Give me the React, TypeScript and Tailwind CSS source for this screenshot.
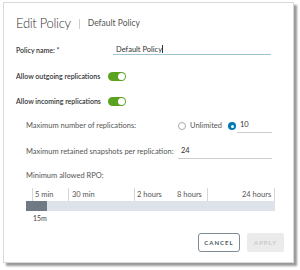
export default function App() {
  const ticks = [
    { label: '5 min', tick: 6, left: 9 },
    { label: '30 min', tick: 42, left: 46 },
    { label: '2 hours', tick: 108, left: 111 },
    { label: '8 hours', tick: 181, left: 151 },
    { label: '24 hours', tick: 248, left: 216 },
  ];

  return (
    <div className="w-[300px] h-[270px] bg-white pt-[2px] pl-[3px] font-['Lato',sans-serif]">
      <div className="w-[291px] h-[261px] border border-[#d9d9d9] bg-white shadow-[3px_3px_2px_rgba(0,0,0,0.4)] flex flex-col">
        {/* header */}
        <div className="flex items-center pl-[12px] pt-[11px] h-[30px]">
          <span className="text-[13px] font-light tracking-[-0.3px] text-[#333] leading-none">Edit Policy</span>
          <span className="w-px h-[10px] bg-[#d0d0d0] mx-[8px]" />
          <span className="text-[8.5px] font-normal text-[#555] leading-none">Default Policy</span>
        </div>

        {/* policy name */}
        <div className="flex items-end pl-[12px] mt-[10px] h-[12px]">
          <span className="w-[97px] text-[7px] font-semibold text-[#333]">Policy name: *</span>
          <div className="w-[158px] border-b-[1.5px] border-[#9fc3d3] pl-[3px] pb-[1px] text-[7.5px] text-[#333] leading-none">
            Default Policy<span className="inline-block w-px h-[8px] bg-[#333] align-[-1px]" />
          </div>
        </div>

        {/* toggles */}
        {['Allow outgoing replications', 'Allow incoming replications'].map((t, i) => (
          <div key={t} className={`flex items-center pl-[12px] h-[10px] ${i === 0 ? 'mt-[16px]' : 'mt-[15px]'}`}>
            <span className="w-[92px] text-[7px] font-semibold text-[#333]">{t}</span>
            <span className="w-[18px] h-[9px] rounded-full bg-[#5aa220] flex items-center justify-end pr-[1px]">
              <span className="w-[7px] h-[7px] rounded-full bg-white" />
            </span>
          </div>
        ))}

        {/* max replications */}
        <div className="flex items-center pl-[22px] mt-[15px] h-[10px] text-[7.5px] text-[#555]">
          <span className="w-[152px]">Maximum number of replications:</span>
          <span className="w-[8px] h-[8px] rounded-full border border-[#aaa]" />
          <span className="ml-[4px] w-[38px]">Unlimited</span>
          <span className="w-[8px] h-[8px] rounded-full bg-[#0079b8] flex items-center justify-center">
            <span className="w-[3px] h-[3px] rounded-full bg-white" />
          </span>
          <span className="ml-[1px] w-[35px] border-b border-[#ccc] pl-[3px] pb-[1px] text-[#333]">10</span>
        </div>

        {/* snapshots */}
        <div className="flex items-center pl-[22px] mt-[16px] h-[10px] text-[7.5px] text-[#555]">
          <span className="w-[152px]">Maximum retained snapshots per replication:</span>
          <span className="w-[94px] border-b border-[#ccc] pl-[3px] pb-[1px] text-[#333]">24</span>
        </div>

        {/* RPO */}
        <div className="pl-[22px] mt-[15px] text-[7.5px] text-[#555] leading-none">Minimum allowed RPO:</div>

        <div className="ml-[22px] mt-[8px] w-[249px]">
          <div className="relative h-[13px] text-[7.5px] text-[#555]">
            {ticks.map((t) => (
              <span key={t.label}>
                <span className="absolute top-0 w-px h-[13px] bg-[#d6d6d6]" style={{ left: t.tick }} />
                <span className="absolute top-[3px] leading-none" style={{ left: t.left }}>
                  {t.label}
                </span>
              </span>
            ))}
          </div>
          <div className="h-[10px] bg-[#dde3e8] flex">
            <div className="w-[21px] bg-[#6f7a84]" />
          </div>
          <div className="pl-[7px] mt-[4px] text-[7px] text-[#444] leading-none">15m</div>
        </div>

        {/* footer */}
        <div className="flex justify-end gap-[7px] pr-[9px] mt-auto mb-[10px]">
          <button className="w-[42px] h-[19px] rounded-[3px] border border-[#7d8c99] text-[6px] font-bold tracking-[1px] text-[#4a5a66]">
            CANCEL
          </button>
          <button className="w-[37px] h-[19px] rounded-[2px] bg-[#ebebeb] text-[6px] font-bold tracking-[1px] text-[#c8c8c8]">
            APPLY
          </button>
        </div>
      </div>
    </div>
  );
}
